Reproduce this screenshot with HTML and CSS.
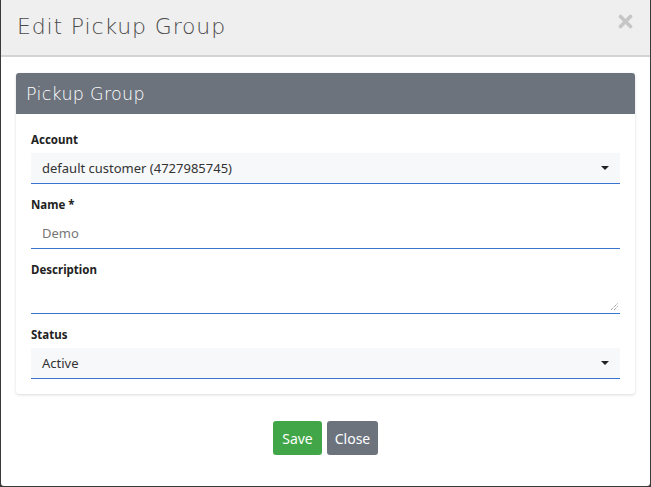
FILE: index.html
```html
<!DOCTYPE html>
<html>
<head>
<meta charset="utf-8">
<link rel="stylesheet" href="styles.css">
</head>
<body>
<div class="modal">
  <div class="modal-header">
    <h4 class="modal-title">Edit Pickup Group</h4>
    <svg class="close" width="15" height="15" viewBox="0 0 15 15"><path d="M2.5 2.5L12.5 12.5M12.5 2.5L2.5 12.5" stroke="#c6c6c6" stroke-width="3.6" stroke-linecap="round"/></svg>
  </div>
  <div class="modal-body">
    <div class="card">
      <div class="card-header">Pickup Group</div>
      <div class="card-body">
        <div class="field">
          <label>Account</label>
          <div class="control select"><span>default customer (4727985745)</span><span class="caret"></span></div>
        </div>
        <div class="field">
          <label>Name *</label>
          <div class="control input"><span class="muted">Demo</span></div>
        </div>
        <div class="field">
          <label>Description</label>
          <div class="control textarea"><svg class="grip" width="9" height="9" viewBox="0 0 9 9"><path d="M1 8L8 1M4 8L8 4" stroke="#777" stroke-width="1" stroke-dasharray="1 1"/></svg></div>
        </div>
        <div class="field">
          <label>Status</label>
          <div class="control select"><span>Active</span><span class="caret"></span></div>
        </div>
      </div>
    </div>
  </div>
  <div class="modal-footer">
    <button class="btn save">Save</button>
    <button class="btn close-btn">Close</button>
  </div>
</div>
</body>
</html>
```
FILE: styles.css
```css
* { box-sizing: border-box; }
html, body { margin: 0; padding: 0; }
body {
  background: #3a3a3a;
  width: 651px;
  height: 487px;
  padding: 0 1px 1px 1px;
  font-family: "Noto Sans", sans-serif;
}
.modal {
  background: #fff;
  width: 649px;
  height: 486px;
  border-radius: 0 0 3px 3px;
  overflow: hidden;
}
.modal-header {
  height: 57px;
  background: #efefef;
  border-bottom: 2px solid #d4d4d4;
  display: flex;
  align-items: center;
  justify-content: space-between;
  padding: 0 17px 0 16px;
}
.modal-title {
  margin: 0;
  font-family: "DejaVu Sans", sans-serif;
  font-weight: 300;
  font-size: 22px;
  color: #4a4a4a;
  letter-spacing: 0.85px;
  padding-bottom: 2px;
}
.close {
  margin-top: -12px;
}
.modal-body {
  padding: 16px 15px 0 15px;
}
.card {
  border-radius: 3px;
  box-shadow: 0 1px 3px rgba(0,0,0,0.15);
  overflow: hidden;
}
.card-header {
  background: #6c737d;
  color: #fff;
  height: 41px;
  padding: 0 10px;
  display: flex;
  align-items: center;
  font-family: "DejaVu Sans", sans-serif;
  font-weight: 300;
  font-size: 17.5px;
  letter-spacing: 0.3px;
}
.card-body {
  padding: 18px 15px 15px 15px;
  display: flex;
  flex-direction: column;
  gap: 13px;
}
.field label {
  display: block;
  font-size: 11.5px;
  font-weight: 700;
  color: #222;
  margin-bottom: 6px;
  height: 15px;
  line-height: 15px;
}
.control {
  height: 31px;
  border-bottom: 1px solid #3874d0;
  display: flex;
  align-items: center;
  padding: 0 11px;
  font-size: 13px;
  color: #333;
  position: relative;
}
.select { background: #f7f8fa; justify-content: space-between; }
.muted { color: #777; }
.caret {
  width: 0; height: 0;
  border-left: 4px solid transparent;
  border-right: 4px solid transparent;
  border-top: 4px solid #222;
  margin-right: 0;
}
.grip { position: absolute; right: 1px; bottom: 2px; }
.modal-footer {
  display: flex;
  justify-content: center;
  gap: 5px;
  padding-top: 27px;
}
.btn {
  height: 34px;
  border: none;
  border-radius: 3px;
  color: #fff;
  font-family: "Noto Sans", sans-serif;
  font-size: 14px;
  padding: 0 7px;
}
.save { background: #41a648; width: 49px; }
.close-btn { background: #6c737d; width: 51px; }
```
